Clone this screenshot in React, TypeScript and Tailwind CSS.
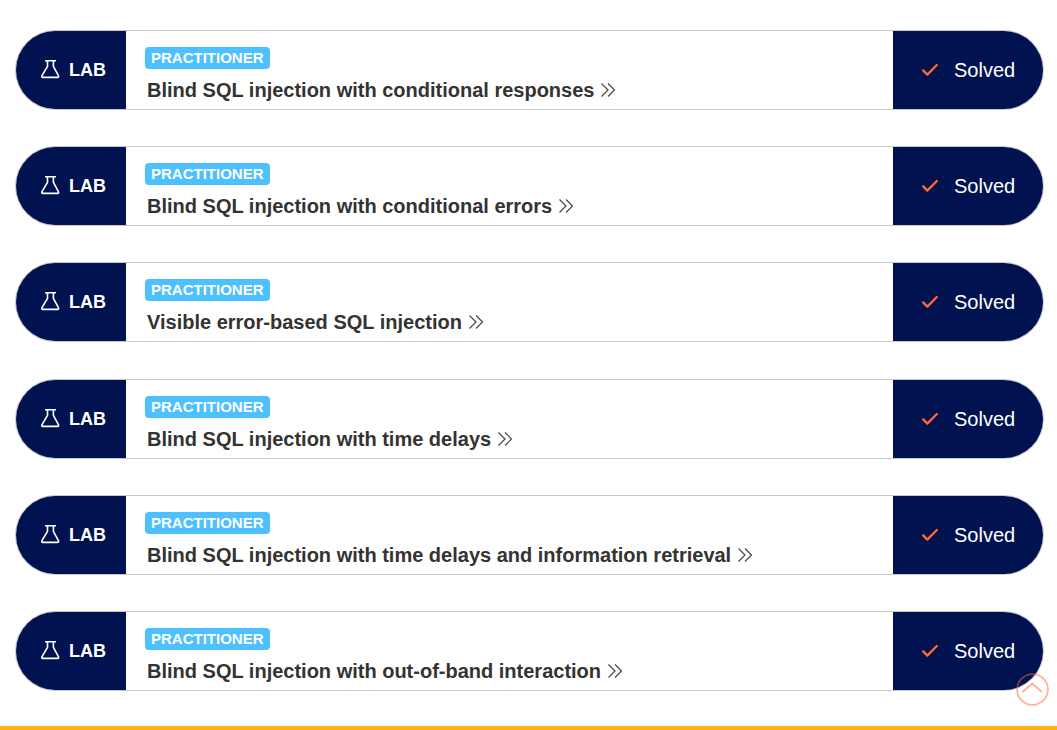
const labs = [
  'Blind SQL injection with conditional responses',
  'Blind SQL injection with conditional errors',
  'Visible error-based SQL injection',
  'Blind SQL injection with time delays',
  'Blind SQL injection with time delays and information retrieval',
  'Blind SQL injection with out-of-band interaction',
];

function FlaskIcon() {
  return (
    <svg className="h-5 w-5 shrink-0" viewBox="0 0 20 20" fill="none" stroke="#fff" strokeWidth="1.6" strokeLinejoin="round" aria-hidden="true">
      <path d="M5 0.8H16M7.5 0.8V6.4L2 15.6Q1.1 17.4 3 17.4H17.4Q19.3 17.4 18.4 15.6L13.4 6.4V0.8" />
    </svg>
  );
}

function CheckIcon() {
  return (
    <svg className="h-5 w-5 shrink-0" viewBox="0 0 20 20" fill="none" stroke="#ff6633" strokeWidth="2.4" strokeLinecap="round" strokeLinejoin="round" aria-hidden="true">
      <path d="M3.2 10.4L7.3 14.6L16.8 5" />
    </svg>
  );
}

function DoubleChevron() {
  return (
    <svg className="h-4 w-4 shrink-0" viewBox="0 0 16 16" fill="none" stroke="#4a4540" strokeWidth="1.2" aria-hidden="true">
      <path d="M1.5 1.5L8 8L1.5 14.5M8 1.5L14.5 8L8 14.5" />
    </svg>
  );
}

function LabRow({ title }: { title: string }) {
  return (
    <li className="flex h-20 overflow-hidden rounded-full border border-[#c8c8c9] bg-white">
      <div className="flex w-[110px] shrink-0 items-center gap-[9px] bg-[#00124f] pl-6 text-lg font-bold text-white">
        <FlaskIcon />
        <span>LAB</span>
      </div>
      <div className="flex min-w-0 flex-1 flex-col items-start gap-[9px] pt-4 pl-[19px]">
        <span className="rounded bg-[#4dc0ff] px-1.5 text-[15px] leading-[22px] font-bold text-white">PRACTITIONER</span>
        <a href="#lab" className="flex items-center gap-1.5 pl-0.5 text-xl leading-6 font-bold text-[#333332]">
          {title}
          <DoubleChevron />
        </a>
      </div>
      <div className="flex w-[150px] shrink-0 items-center gap-3.5 bg-[#00124f] pl-[27px] text-xl text-white">
        <CheckIcon />
        <span>Solved</span>
      </div>
    </li>
  );
}

export default function App() {
  return (
    <div className="flex min-h-screen flex-col bg-white font-['Liberation_Sans',Arial,sans-serif]">
      <main className="flex flex-1 flex-col px-[15px] pt-[30px] pr-[13px] pb-[35px]">
        <ul className="flex flex-1 flex-col justify-between gap-9">
          {labs.map((title) => (
            <LabRow key={title} title={title} />
          ))}
        </ul>
      </main>
      <footer className="h-1 bg-[#ffb013]" />
      <button type="button" aria-label="Back to top" className="fixed right-2 bottom-6 h-[33px] w-[33px] opacity-50">
        <svg className="h-full w-full" viewBox="0 0 33 33" fill="none" stroke="#ff6633" strokeWidth="1.8" aria-hidden="true">
          <circle cx="16.5" cy="16.5" r="15.4" />
          <path d="M6.3 19L16.2 10.5L26 19" />
        </svg>
      </button>
    </div>
  );
}
